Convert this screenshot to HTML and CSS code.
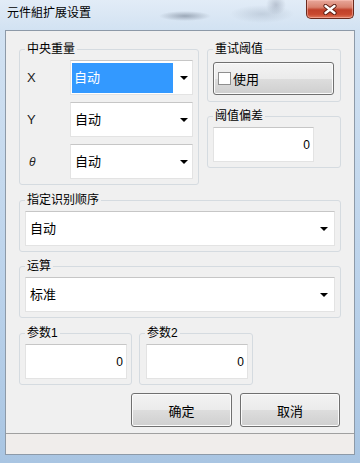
FILE: index.html
```html
<!DOCTYPE html>
<html lang="zh">
<head>
    <meta charset="UTF-8">
    <title>元件組扩展设置</title>
    <link rel="stylesheet" href="styles.css">
</head>
<body>
    <div class="window">
        <!-- Title bar -->
        <div class="titlebar">
            <span class="title">元件組扩展设置</span>
            <div class="close-btn">
                <svg width="14" height="11" viewBox="0 0 14 11">
                    <path d="M2.5 2 L11.5 9 M11.5 2 L2.5 9" stroke="#5b1c12" stroke-width="4.2" stroke-linecap="round"/>
                    <path d="M2.5 2 L11.5 9 M11.5 2 L2.5 9" stroke="#fff" stroke-width="2.4" stroke-linecap="round"/>
                </svg>
            </div>
        </div>

        <div class="client">
            <div class="content">
                <div class="row-top">
                    <!-- Center of gravity -->
                    <fieldset class="group group-center">
                        <legend>中央重量</legend>
                        <div class="axis-grid">
                            <span class="axis">X</span>
                            <div class="combo"><span class="value selected">自动</span><span class="arrow"></span></div>
                            <span class="axis">Y</span>
                            <div class="combo"><span class="value">自动</span><span class="arrow"></span></div>
                            <span class="axis axis-theta">θ</span>
                            <div class="combo"><span class="value">自动</span><span class="arrow"></span></div>
                        </div>
                    </fieldset>

                    <div class="side">
                        <fieldset class="group">
                            <legend>重试阈值</legend>
                            <div class="group-body retry-body">
                                <button class="btn btn-check"><span class="checkbox"></span>使用</button>
                            </div>
                        </fieldset>
                        <fieldset class="group group-offset">
                            <legend>阈值偏差</legend>
                            <div class="group-body">
                                <div class="field field-offset">0</div>
                            </div>
                        </fieldset>
                    </div>
                </div>

                <fieldset class="group group-order">
                    <legend>指定识别顺序</legend>
                    <div class="group-body">
                        <div class="combo"><span class="value">自动</span><span class="arrow arrow-wide"></span></div>
                    </div>
                </fieldset>

                <fieldset class="group group-calc">
                    <legend>运算</legend>
                    <div class="group-body">
                        <div class="combo"><span class="value">标准</span><span class="arrow arrow-wide"></span></div>
                    </div>
                </fieldset>

                <div class="param-row">
                    <fieldset class="group group-param">
                        <legend>参数1</legend>
                        <div class="group-body">
                            <div class="field field-param">0</div>
                        </div>
                    </fieldset>
                    <fieldset class="group group-param group-param-2">
                        <legend>参数2</legend>
                        <div class="group-body">
                            <div class="field field-param">0</div>
                        </div>
                    </fieldset>
                </div>

                <div class="buttons">
                    <button class="btn btn-ok">确定</button>
                    <button class="btn btn-cancel">取消</button>
                </div>
            </div>

            <div class="statusbar"></div>
        </div>
    </div>
</body>
</html>
```

FILE: styles.css
```css
/* Base */
* {
    box-sizing: border-box;
}

body {
    margin: 0;
    width: 360px;
    height: 463px;
    overflow: hidden;
    font-family: "Liberation Sans", "Noto Sans CJK SC", sans-serif;
    color: #000;
    background: linear-gradient(180deg, #e2ecf7 0%, #d2e2f2 30px, #bcd3eb 60%, #a9c5e2 100%);
}

.window {
    height: 463px;
    display: flex;
    flex-direction: column;
}

/* Title bar */
.titlebar {
    height: 30px;
    flex-shrink: 0;
    display: flex;
    align-items: flex-start;
    background:
        radial-gradient(ellipse 26px 5px at 185px 16px, rgba(80, 92, 110, 0.45), transparent),
        radial-gradient(ellipse 32px 9px at 262px 14px, rgba(120, 135, 155, 0.25), transparent),
        radial-gradient(ellipse 10px 10px at 276px 5px, rgba(110, 120, 140, 0.35), transparent);
}

.title {
    margin: 6px 0 0 7px;
    font-size: 12px;
    line-height: 15px;
}

.close-btn {
    margin-left: auto;
    margin-right: 6px;
    width: 48px;
    height: 19px;
    display: flex;
    align-items: center;
    justify-content: center;
    border: 1px solid #6a2a1e;
    border-top: none;
    border-radius: 0 0 5px 5px;
    background: linear-gradient(180deg, #e8a89b 0%, #d9826f 40%, #c0402a 55%, #c9492f 80%, #e07a5c 100%);
    box-shadow: inset 0 0 0 1px rgba(255, 200, 190, 0.5);
}

/* Client area */
.client {
    flex: 1;
    margin: 0 5px 8px;
    border: 1px solid #8d9aa8;
    background: #f0f0f0;
    display: flex;
    flex-direction: column;
}

.content {
    flex: 1;
    padding: 11px 13px 0;
}

/* Group boxes */
.group {
    margin: 0;
    padding: 0;
    min-width: 0;
    border: 1px solid #d5dbe0;
    border-radius: 3px;
}

.group legend {
    margin-left: 5px;
    padding: 0 2px;
    font-size: 12px;
    line-height: 14px;
}

.group-body {
    padding: 4px 5px 5px;
}

.row-top {
    display: flex;
    gap: 8px;
}

.group-center {
    width: 180px;
}

.axis-grid {
    display: grid;
    grid-template-columns: 50px 1fr;
    row-gap: 7px;
    align-items: center;
    padding: 4px 5px 5px 0;
}

.axis {
    padding-left: 7px;
    font-size: 13px;
    color: #222;
}

.axis-theta {
    padding-left: 9px;
    font-size: 12px;
    font-style: italic;
}

.side {
    width: 134px;
}

.retry-body {
    padding: 6px 6px 6px 5px;
}

.group-offset {
    margin-top: 7px;
}

.group-order {
    margin-top: 8px;
}

.group-calc {
    margin-top: 7px;
}

/* Combo boxes */
.combo {
    height: 35px;
    display: flex;
    align-items: center;
    background: #fff;
    border: 1px solid #e3e3e3;
    border-top-color: #c6c6c6;
}

.value {
    padding-left: 4px;
    font-size: 13px;
    line-height: 16px;
}

.value.selected {
    align-self: stretch;
    display: flex;
    align-items: center;
    width: 101px;
    margin: 2px 0 1px 1px;
    padding-left: 2px;
    background: #3399ff;
    color: #fff;
}

.arrow {
    margin-left: auto;
    margin-right: 4px;
    width: 0;
    height: 0;
    border-left: 4px solid transparent;
    border-right: 4px solid transparent;
    border-top: 4px solid #000;
}

.arrow-wide {
    margin-right: 6px;
}

/* Edit fields */
.field {
    height: 35px;
    display: flex;
    align-items: center;
    justify-content: flex-end;
    padding-right: 3px;
    background: #fff;
    border: 1px solid #e3e3e3;
    border-top-color: #c6c6c6;
    font-size: 12px;
}

.field-offset {
    width: 101px;
}

.field-param {
    width: 102px;
}

.param-row {
    display: flex;
    gap: 7px;
    margin-top: 8px;
}

.group-param {
    width: 113px;
}

.group-param-2 {
    width: 114px;
}

.group-param-2 .group-body {
    padding-left: 6px;
}

/* Buttons */
.btn {
    display: flex;
    align-items: center;
    justify-content: center;
    height: 34px;
    padding: 0;
    border: 1px solid #707070;
    border-radius: 3px;
    background: linear-gradient(180deg, #f3f3f3 0%, #ebebeb 50%, #dddddd 51%, #cfcfcf 100%);
    box-shadow: inset 0 0 0 1px #fbfbfb;
    font-family: "Liberation Sans", "Noto Sans CJK SC", sans-serif;
    font-size: 13px;
    color: #000;
}

.btn-check {
    width: 121px;
    height: 33px;
    justify-content: flex-start;
    padding-left: 4px;
    gap: 2px;
}

.checkbox {
    width: 13px;
    height: 13px;
    border: 1px solid #8f8f8f;
    background: #fff;
}

.buttons {
    display: flex;
    justify-content: flex-end;
    gap: 8px;
    margin-top: 8px;
    padding-right: 1px;
}

.btn-ok {
    width: 101px;
}

.btn-cancel {
    width: 100px;
}

/* Status bar */
.statusbar {
    height: 21px;
    border-top: 1px solid #a0a0a0;
    background: #f0edeb;
}
```
